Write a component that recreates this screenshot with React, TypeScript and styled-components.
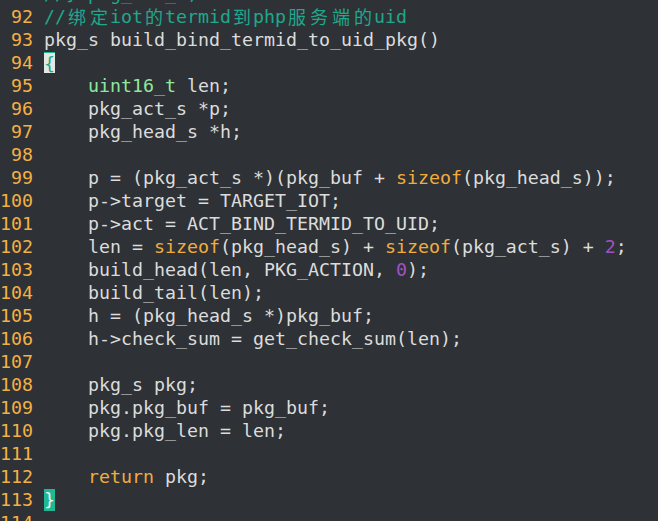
import React from "react";
import styled, { createGlobalStyle } from "styled-components";

const Global = createGlobalStyle`
  html, body {
    margin: 0;
    padding: 0;
    background: #2e3236;
    overflow: hidden;
  }
`;

const Editor = styled.div`
  width: 658px;
  height: 521px;
  overflow: hidden;
  background: #2e3236;
  font-family: "DejaVu Sans Mono", "Liberation Mono", monospace;
  font-size: 18.27px;
  color: #dcdcdc;
`;

const Lines = styled.div`
  display: flex;
  flex-direction: column;
  margin-top: -18px;
`;

const Row = styled.div`
  display: flex;
  height: 23px;
  line-height: 23px;
  white-space: pre;
`;

const Num = styled.span`
  width: 33px;
  margin-right: 11px;
  text-align: right;
  color: #f4b043;
  flex: none;
`;

const Code = styled.span`
  white-space: pre;
`;

type Kind = "comment" | "type" | "kw" | "num";

const colors: Record<Kind, string> = {
  comment: "#1fa88b",
  type: "#8fe89c",
  kw: "#f2ac3c",
  num: "#a052c4",
};

const Tok = styled.span<{ $k: Kind }>`
  color: ${(p) => colors[p.$k]};
`;

const WideCell = styled.span`
  display: inline-block;
  width: 22px;
  text-align: center;
  font-family: "Noto Sans CJK SC", sans-serif;
  font-size: 18px;
  line-height: 23px;
  vertical-align: top;
`;

const Cursor = styled.span`
  display: inline-block;
  width: 11px;
  height: 21px;
  margin-top: 1px;
  line-height: 21px;
  box-sizing: border-box;
  background: #e2e8e4;
  border-top: 1px solid #1fb894;
  color: #1ba88a;
  vertical-align: top;
`;

const Match = styled.span`
  display: inline-block;
  width: 11px;
  height: 22px;
  margin-top: 1px;
  line-height: 21px;
  background: #1fb894;
  color: #f2f2f2;
  vertical-align: top;
`;

const Wide: React.FC<{ t: string }> = ({ t }) => (
  <>
    {Array.from(t).map((c, i) => (
      <WideCell key={i}>{c}</WideCell>
    ))}
  </>
);

const K = (k: Kind, t: string) => <Tok $k={k}>{t}</Tok>;

const lines: [number, React.ReactNode][] = [
  [91, K("comment", "//} pkg_act_s;")],
  [
    92,
    <Tok $k="comment">
      //<Wide t="绑定" />iot<Wide t="的" />termid<Wide t="到" />php
      <Wide t="服务端的" />uid
    </Tok>,
  ],
  [93, "pkg_s build_bind_termid_to_uid_pkg()"],
  [94, <Cursor>{"{"}</Cursor>],
  [95, <>{"    "}{K("type", "uint16_t")} len;</>],
  [96, "    pkg_act_s *p;"],
  [97, "    pkg_head_s *h;"],
  [98, ""],
  [99, <>{"    p = (pkg_act_s *)(pkg_buf + "}{K("kw", "sizeof")}(pkg_head_s));</>],
  [100, "    p->target = TARGET_IOT;"],
  [101, "    p->act = ACT_BIND_TERMID_TO_UID;"],
  [
    102,
    <>
      {"    len = "}
      {K("kw", "sizeof")}
      {"(pkg_head_s) + "}
      {K("kw", "sizeof")}
      {"(pkg_act_s) + "}
      {K("num", "2")};
    </>,
  ],
  [103, <>{"    build_head(len, PKG_ACTION, "}{K("num", "0")});</>],
  [104, "    build_tail(len);"],
  [105, "    h = (pkg_head_s *)pkg_buf;"],
  [106, "    h->check_sum = get_check_sum(len);"],
  [107, ""],
  [108, "    pkg_s pkg;"],
  [109, "    pkg.pkg_buf = pkg_buf;"],
  [110, "    pkg.pkg_len = len;"],
  [111, ""],
  [112, <>{"    "}{K("kw", "return")} pkg;</>],
  [113, <Match>{"}"}</Match>],
  [114, ""],
];

export default function App() {
  return (
    <Editor>
      <Global />
      <Lines>
        {lines.map(([n, c]) => (
          <Row key={n}>
            <Num>{n}</Num>
            <Code>{c}</Code>
          </Row>
        ))}
      </Lines>
    </Editor>
  );
}
